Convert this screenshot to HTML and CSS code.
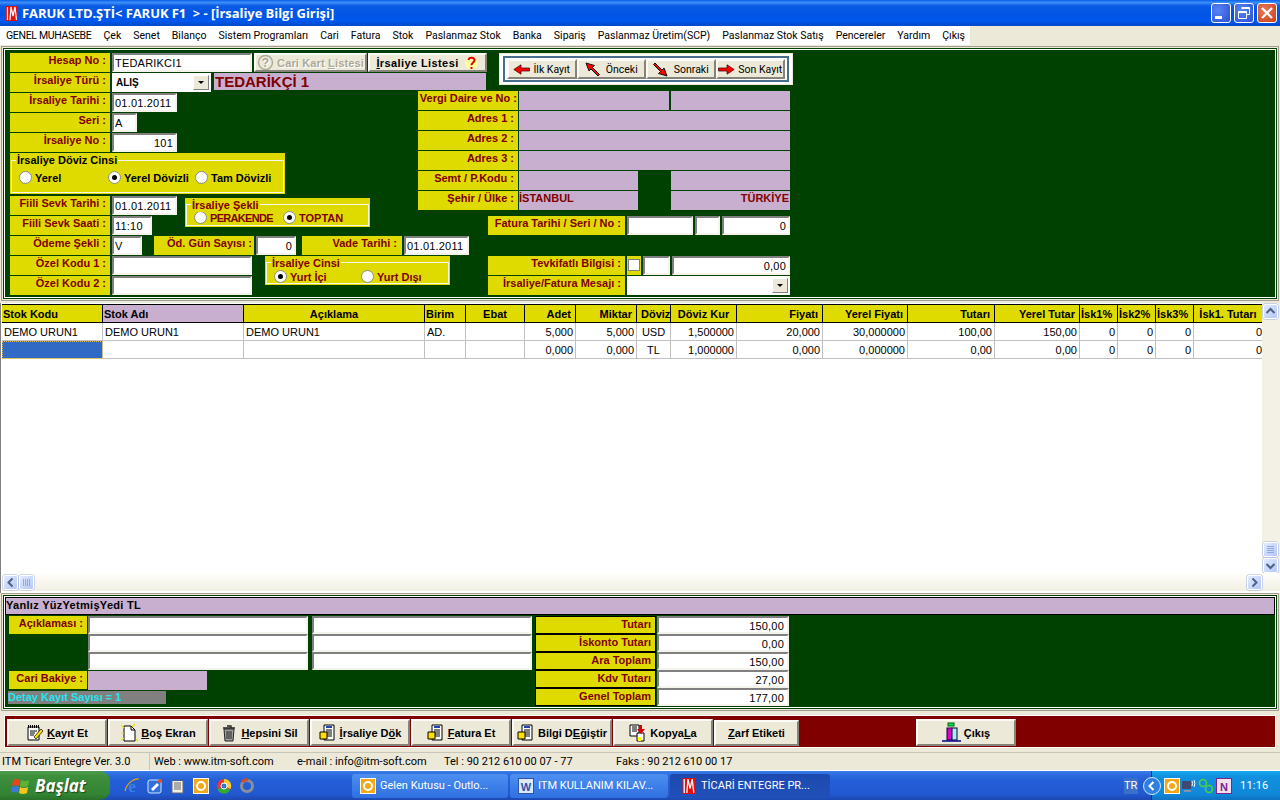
FILE: index.html
```html
<!DOCTYPE html>
<html lang="tr">
<head>
<meta charset="utf-8">
<title>İrsaliye Bilgi Girişi</title>
<link rel="stylesheet" href="styles.css">
</head>
<body>
<div class="app">
  <header class="titlebar">
    <svg class="applogo" viewBox="0 0 12 15" width="12" height="15"><rect width="12" height="15" fill="#e01010"/><path d="M1.500 1v13M4 14L5 1l2 9 2-9 1.500 13" stroke="#fff" stroke-width="1.200" fill="none"/></svg>
    <span class="title">FARUK LTD.ŞTİ&lt; FARUK F1 &nbsp;&gt; - [İrsaliye Bilgi Girişi]</span>
    <div class="winbtns">
      <span class="winbtn"><svg width="20" height="20" viewBox="0 0 20 20"><rect x="4" y="13" width="7" height="3" fill="#fff"/></svg></span>
      <span class="winbtn"><svg width="20" height="20" viewBox="0 0 20 20"><path d="M7.500 4.500h8v7h-3M4.500 8.500h8v7h-8z M4.500 9.500h8M7.500 5.500h8" fill="none" stroke="#fff"/></svg></span>
      <span class="winbtn close"><svg width="20" height="20" viewBox="0 0 20 20"><path d="M5 5l10 10M15 5L5 15" stroke="#fff" stroke-width="2.200"/></svg></span>
    </div>
  </header>

  <nav class="menubar">
    <div class="menuitems">
      <span class="caps">GENEL MUHASEBE</span><span>Çek</span><span>Senet</span><span>Bilanço</span><span>Sistem Programları</span><span>Cari</span><span>Fatura</span><span>Stok</span><span>Paslanmaz Stok</span><span>Banka</span><span>Sipariş</span><span>Paslanmaz Üretim(SCP)</span><span>Paslanmaz Stok Satış</span><span>Pencereler</span><span>Yardım</span><span>Çıkış</span>
    </div>
  </nav>

  <section class="formframe">
    <div class="greenpanel form">
      <div class="formhead">
        <div class="headleft">
          <div class="row">
            <div class="lb w100">Hesap No :</div>
            <div class="in w140">TEDARIKCI1</div>
            <button class="btn disabled btn-cari"><svg width="17" height="17" viewBox="0 0 17 17"><circle cx="8.500" cy="8.500" r="7" fill="#ece9d8" stroke="#a8a898" stroke-width="1.400"/><text x="8.500" y="12.500" text-anchor="middle" class="qtext">?</text></svg><span>Cari Kart <u>L</u>istesi</span></button>
            <button class="btn btn-list"><span><u>İ</u>rsaliye Listesi</span><svg width="15" height="16" viewBox="0 0 15 16"><circle cx="7.500" cy="8" r="6.500" fill="#ffffa0"/><path d="M4.500 5c.5-3 6-3 6 .3 0 2-3 2.300-3 5" fill="none" stroke="#e00000" stroke-width="2"/><rect x="6.500" y="12" width="2" height="2" fill="#e00000"/></svg></button>
          </div>
          <div class="row">
            <div class="lb w100">İrsaliye Türü :</div>
            <div class="combo w99"><span class="combotext">ALIŞ</span><span class="dropbtn"><i></i></span></div>
            <div class="tedarik">TEDARİKÇİ 1</div>
          </div>
        </div>
        <div class="navbox">
          <div class="navinner">
            <button class="btn navbtn"><svg width="17" height="11" viewBox="0 0 17 11"><path d="M.8 5.500L8 .8v3.200h8.500v3H8v3.200z" fill="#f00" stroke="#300" stroke-width=".7"/></svg><span>İlk Kayıt</span></button>
            <button class="btn navbtn"><svg width="15" height="15" viewBox="0 0 15 15"><path d="M1 1l8.500 2.500-2 2 7 7-1.500 1.500-7-7-2 2z" fill="#f00" stroke="#111" stroke-width="1"/></svg><span>Önceki</span></button>
            <button class="btn navbtn"><svg width="15" height="15" viewBox="0 0 15 15"><path d="M14 14l-8.500-2.500 2-2-7-7L2 1l7 7 2-2z" fill="#f00" stroke="#111" stroke-width="1"/></svg><span>Sonraki</span></button>
            <button class="btn navbtn"><svg width="17" height="11" viewBox="0 0 17 11"><path d="M16.200 5.500L9 .8v3.200H.5v3H9v3.200z" fill="#f00" stroke="#300" stroke-width=".7"/></svg><span>Son Kayıt</span></button>
          </div>
        </div>
      </div>

      <div class="formbody">
        <div class="leftcol">
          <div class="row"><div class="lb w100">İrsaliye Tarihi :</div><div class="in w65">01.01.2011</div></div>
          <div class="row"><div class="lb w100">Seri :</div><div class="in w25">A</div></div>
          <div class="row"><div class="lb w100">İrsaliye No :</div><div class="in w65 num">101</div></div>

          <div class="group gdoviz">
            <span class="legend">İrsaliye Döviz Cinsi</span>
            <div class="radios rd1">
              <label class="radio"><i class="rb"></i>Yerel</label>
              <label class="radio"><i class="rb on"></i>Yerel Dövizli</label>
              <label class="radio"><i class="rb"></i>Tam Dövizli</label>
            </div>
          </div>

          <div class="rowpair">
            <div class="stack">
              <div class="row"><div class="lb w100">Fiili Sevk Tarihi :</div><div class="in w65">01.01.2011</div></div>
              <div class="row"><div class="lb w100">Fiili Sevk Saati :</div><div class="in w40">11:10</div></div>
            </div>
            <div class="group gsekli">
              <span class="legend">İrsaliye Şekli</span>
              <div class="radios rd2">
                <label class="radio red"><i class="rb"></i><span class="cond">PERAKENDE</span></label>
                <label class="radio red"><i class="rb on"></i>TOPTAN</label>
              </div>
            </div>
          </div>

          <div class="row">
            <div class="lb w100">Ödeme Şekli :</div><div class="in w30">V</div>
            <div class="lb w100 gun">Öd. Gün Sayısı :</div><div class="in w40 num">0</div>
            <div class="lb w100 vade">Vade Tarihi :</div><div class="in w65">01.01.2011</div>
          </div>

          <div class="rowpair">
            <div class="stack">
              <div class="row"><div class="lb w100">Özel Kodu 1 :</div><div class="in w140"></div></div>
              <div class="row"><div class="lb w100">Özel Kodu 2 :</div><div class="in w140"></div></div>
            </div>
            <div class="group gcinsi">
              <span class="legend">İrsaliye Cinsi</span>
              <div class="radios rd3">
                <label class="radio red"><i class="rb on"></i>Yurt İçi</label>
                <label class="radio red"><i class="rb"></i>Yurt Dışı</label>
              </div>
            </div>
          </div>
        </div>

        <div class="rightcol">
          <div class="row"><div class="lb w100 tight">Vergi Daire ve No :</div><div class="val w150"></div><div class="val w119 gap2"></div></div>
          <div class="row"><div class="lb w100">Adres 1 :</div><div class="val w271"></div></div>
          <div class="row"><div class="lb w100">Adres 2 :</div><div class="val w271"></div></div>
          <div class="row"><div class="lb w100">Adres 3 :</div><div class="val w271"></div></div>
          <div class="row"><div class="lb w100">Semt / P.Kodu :</div><div class="val w119x"></div><div class="val w119 gap33"></div></div>
          <div class="row"><div class="lb w100">Şehir / Ülke :</div><div class="val w119x">İSTANBUL</div><div class="val w119 gap33 right">TÜRKİYE</div></div>
          <div class="row rfat">
            <div class="lb w137">Fatura Tarihi / Seri / No :</div>
            <div class="in w66"></div><div class="in w25"></div><div class="in w68 num">0</div>
          </div>
          <div class="row rtev">
            <div class="lb w137">Tevkifatlı Bilgisi :</div>
            <div class="chkwrap"><i class="chk"></i></div>
            <div class="in w27"></div><div class="in w118 num">0,00</div>
          </div>
          <div class="row rmes">
            <div class="lb w137">İrsaliye/Fatura Mesajı :</div>
            <div class="combo w163"><span class="combotext"></span><span class="dropbtn"><i></i></span></div>
          </div>
        </div>
      </div>
    </div>
  </section>

  <section class="gridpanel">
    <div class="gridmain">
      <table class="datagrid">
        <thead>
          <tr>
            <th class="l">Stok Kodu</th><th class="l lilac">Stok Adı</th><th>Açıklama</th><th class="l">Birim</th><th>Ebat</th><th class="r">Adet</th><th class="r">Miktar</th><th>Döviz</th><th>Döviz Kur</th><th class="r">Fiyatı</th><th class="r">Yerel Fiyatı</th><th class="r">Tutarı</th><th class="r">Yerel Tutar</th><th class="l">İsk1%</th><th class="l">İsk2%</th><th class="l">İsk3%</th><th>İsk1. Tutarı</th>
          </tr>
        </thead>
        <tbody>
          <tr>
            <td>DEMO URUN1</td><td>DEMO URUN1</td><td>DEMO URUN1</td><td>AD.</td><td></td><td class="r">5,000</td><td class="r">5,000</td><td class="c">USD</td><td class="r">1,500000</td><td class="r">20,000</td><td class="r">30,000000</td><td class="r">100,00</td><td class="r">150,00</td><td class="r">0</td><td class="r">0</td><td class="r">0</td><td class="r">0</td>
          </tr>
          <tr>
            <td class="selected"></td><td></td><td></td><td></td><td></td><td class="r">0,000</td><td class="r">0,000</td><td class="c">TL</td><td class="r">1,000000</td><td class="r">0,000</td><td class="r">0,000000</td><td class="r">0,00</td><td class="r">0,00</td><td class="r">0</td><td class="r">0</td><td class="r">0</td><td class="r">0</td>
          </tr>
        </tbody>
      </table>
      <div class="vscroll">
        <span class="sbtn"><svg width="15" height="15" viewBox="0 0 15 15"><path d="M3.500 9l4-4 4 4" class="chev"/></svg></span>
        <span class="vspace"></span>
        <span class="sbtn thumb"><svg width="15" height="15" viewBox="0 0 15 15"><path d="M4 4.500h7M4 6.500h7M4 8.500h7M4 10.500h7" class="grip"/></svg></span>
        <span class="sbtn"><svg width="15" height="15" viewBox="0 0 15 15"><path d="M3.500 6l4 4 4-4" class="chev"/></svg></span>
      </div>
    </div>
    <div class="hscroll">
      <span class="sbtn"><svg width="15" height="15" viewBox="0 0 15 15"><path d="M9.500 3.500l-4 4 4 4" class="chev"/></svg></span>
      <span class="sbtn thumb"><svg width="15" height="15" viewBox="0 0 15 15"><path d="M4.500 4v7M6.500 4v7M8.500 4v7M10.500 4v7" class="grip"/></svg></span>
      <span class="hspace"></span>
      <span class="sbtn"><svg width="15" height="15" viewBox="0 0 15 15"><path d="M5.500 3.500l4 4-4 4" class="chev"/></svg></span>
    </div>
  </section>

  <section class="totalsframe">
    <div class="greenpanel totals">
      <div class="yazi">Yanlız YüzYetmişYedi TL</div>
      <div class="totalsbody">
        <div class="notes">
          <div class="noterow"><div class="lb2">Açıklaması :</div><div class="in w220 s18"></div><div class="in w220 s18"></div></div>
          <div class="noterow"><div class="spacer78"></div><div class="in w220 s18"></div><div class="in w220 s18"></div></div>
          <div class="noterow"><div class="spacer78"></div><div class="in w220 s18"></div><div class="in w220 s18"></div></div>
          <div class="noterow cari"><div class="lb2">Cari Bakiye :</div><div class="val w119"></div></div>
          <div class="detay">Detay Kayıt Sayısı = 1</div>
        </div>
        <div class="sums">
          <div class="sumrow"><div class="sumlb">Tutarı</div><div class="in sumval">150,00</div></div>
          <div class="sumrow"><div class="sumlb">İskonto Tutarı</div><div class="in sumval">0,00</div></div>
          <div class="sumrow"><div class="sumlb">Ara Toplam</div><div class="in sumval">150,00</div></div>
          <div class="sumrow"><div class="sumlb">Kdv Tutarı</div><div class="in sumval">27,00</div></div>
          <div class="sumrow"><div class="sumlb">Genel Toplam</div><div class="in sumval">177,00</div></div>
        </div>
      </div>
    </div>
  </section>

  <section class="actionsframe">
    <div class="actions">
      <button class="btn act"><svg width="18" height="18" viewBox="0 0 18 18"><path d="M2 3h11v13H2z" fill="#fff" stroke="#000"/><path d="M2.500 1v3M4.500 1v3M6.500 1v3M8.500 1v3M10.500 1v3M12.500 1v3" stroke="#000"/><path d="M4 7h7M4 9h5M4 11h4" stroke="#000"/><path d="M8 13l7-8 2 2-7 8z" fill="#ffe000" stroke="#000" stroke-width=".7"/></svg><span><u>K</u>ayıt Et</span></button>
      <button class="btn act"><svg width="18" height="18" viewBox="0 0 18 18"><path d="M4 2h7l4 4v11H4z" fill="#fff" stroke="#000"/><path d="M11 2v4h4" fill="none" stroke="#000"/><path d="M1 1l3 3M15 0l-3 3M1 9h3M16 15l2 2M1 16l3-2" stroke="#e8e000" stroke-width="1.200"/></svg><span><u>B</u>oş Ekran</span></button>
      <button class="btn act"><svg width="18" height="18" viewBox="0 0 18 18"><path d="M4 5h10l-1 12H5z" fill="#a0a0a0" stroke="#222"/><path d="M3 4h12M7 2h4v2" fill="none" stroke="#222" stroke-width="1.300"/><path d="M7 7v8M9 7v8M11 7v8" stroke="#222"/></svg><span><u>H</u>epsini Sil</span></button>
      <button class="btn act"><svg class="doc" width="18" height="18" viewBox="0 0 18 18"><use href="#docicon"/></svg><span><u>İ</u>rsaliye D<u>ö</u>k</span></button>
      <button class="btn act"><svg class="doc" width="18" height="18" viewBox="0 0 18 18"><use href="#docicon"/></svg><span><u>F</u>atura Et</span></button>
      <button class="btn act"><svg class="doc" width="18" height="18" viewBox="0 0 18 18"><use href="#docicon"/></svg><span>Bilgi D<u>E</u>ğiştir</span></button>
      <button class="btn act"><svg width="18" height="18" viewBox="0 0 18 18"><path d="M1 1h9v11H1z" fill="#fff" stroke="#000"/><path d="M3 3h5M3 5h5M3 7h5" stroke="#000"/><path d="M8 9h7v8H8z" fill="#fff" stroke="#000"/><path d="M10 1h3v4h3l-4 5-4-5h2z" fill="#e00000"/><rect x="9" y="13" width="3" height="4" fill="#ff0"/></svg><span>Kopya<u>L</u>a</span></button>
      <button class="btn act zarf"><span><u>Z</u>arf Etiketi</span></button>
      <button class="btn act cikis"><svg width="19" height="21" viewBox="0 0 19 21"><rect x="6" y="1" width="6" height="3" fill="#00e060" stroke="#060"/><rect x="5" y="6" width="5" height="12" fill="#e000d0" stroke="#003"/><rect x="10" y="6" width="5" height="12" fill="#a8f0f0" stroke="#003"/><path d="M0 19h19" stroke="#008" stroke-width="1.500"/></svg><span>Çıkış</span></button>
    </div>
  </section>

  <footer class="statusbar">
    <div class="stat s1">ITM Ticari Entegre Ver. 3.0</div>
    <div class="stat s2"><span>Web : www.itm-soft.com</span><span>e-mail : info@itm-soft.com</span><span>Tel : 90 212 610 00 07 - 77</span><span>Faks : 90 212 610 00 17</span></div>
  </footer>

  <div class="taskbar">
    <div class="start"><svg width="20" height="18" viewBox="0 0 20 18"><path d="M2 3q3-2 7 0l-1 6q-4-2-7 0z" fill="#e8451e"/><path d="M10 3q4 2 8 0l-1 6q-4 2-8 0z" fill="#5bb431"/><path d="M1 10q3-2 7 0l-1 6q-4-2-7 0z" fill="#3b78d8"/><path d="M9 10q4 2 8 0l-1 6q-4 2-8 0z" fill="#f5c518"/></svg><span>Başlat</span></div>
    <div class="quick">
      <svg class="ieicon" width="18" height="18" viewBox="0 0 18 18"><text x="9" y="15" text-anchor="middle" class="ie">e</text><path d="M2 14C4 6 11 1 16 2" fill="none" stroke="#e8a317" stroke-width="1.200"/></svg>
      <svg width="16" height="16" viewBox="0 0 16 16"><rect x="1" y="2" width="13" height="13" rx="2" fill="#2f6fd8" stroke="#cfe4ff"/><path d="M4 11l6-6 2 2-6 6z" fill="#fff"/><circle cx="13" cy="3" r="2" fill="#e85020"/></svg>
      <svg width="16" height="16" viewBox="0 0 16 16"><rect x="2" y="2" width="11" height="13" fill="#f4f0dc" stroke="#667"/><path d="M4 5h7M4 7h7M4 9h7M4 11h7" stroke="#667"/><path d="M2 2h11" stroke="#3060b0" stroke-width="2"/></svg>
      <svg width="16" height="16" viewBox="0 0 16 16"><rect x=".5" y=".5" width="15" height="15" fill="#f4a818" stroke="#fff"/><circle cx="8" cy="8" r="4" fill="none" stroke="#fff" stroke-width="2"/></svg>
      <svg width="16" height="16" viewBox="0 0 16 16"><circle cx="8" cy="8" r="7" fill="#e33"/><path d="M8 8L1.500 11.500A7 7 0 0 0 14 12z" fill="#3a3"/><path d="M8 1a7 7 0 0 1 6.500 10L8 8z" fill="#fc3"/><circle cx="8" cy="8" r="3" fill="#37c" stroke="#fff"/></svg>
      <svg width="16" height="16" viewBox="0 0 16 16"><circle cx="8" cy="8" r="5.500" fill="none" stroke="#8a8f9a" stroke-width="3"/><path d="M3 4a6 6 0 0 1 6-2" fill="none" stroke="#d84a20" stroke-width="3"/></svg>
    </div>
    <div class="tasks">
      <div class="task"><svg width="16" height="16" viewBox="0 0 16 16"><rect x=".5" y=".5" width="15" height="15" fill="#f4a818" stroke="#fff"/><circle cx="8" cy="8" r="4" fill="none" stroke="#fff" stroke-width="2"/></svg><span>Gelen Kutusu - Outlo...</span></div>
      <div class="task"><svg width="16" height="16" viewBox="0 0 16 16"><rect x=".5" y=".5" width="15" height="15" fill="#dfe8f8" stroke="#2a55a8"/><text x="8" y="13" text-anchor="middle" class="wd">W</text></svg><span>ITM KULLANIM KILAV...</span></div>
      <div class="task active"><svg width="16" height="16" viewBox="0 0 12 15"><rect width="12" height="15" fill="#e01010"/><path d="M1.500 1v13M4 14L5 1l2 9 2-9 1.500 13" stroke="#fff" stroke-width="1.200" fill="none"/></svg><span>TİCARİ ENTEGRE PR...</span></div>
    </div>
    <div class="lang">TR</div>
    <div class="tray">
      <span class="trayarrow"><svg width="18" height="18" viewBox="0 0 18 18"><circle cx="9" cy="9" r="8.500" fill="#2f7fe0" stroke="#cfe8ff"/><path d="M10.500 5l-4 4 4 4" fill="none" stroke="#fff" stroke-width="2"/></svg></span>
      <svg width="16" height="16" viewBox="0 0 16 16"><rect x=".5" y=".5" width="15" height="15" fill="#f4a818" stroke="#fff"/><circle cx="8" cy="8" r="4" fill="none" stroke="#fff" stroke-width="2"/></svg>
      <svg width="16" height="16" viewBox="0 0 16 16"><rect x="1" y="3" width="9" height="8" fill="#404a70"/><rect x="3" y="12" width="7" height="2" fill="#8890b0"/><path d="M11 3a6 6 0 0 1 0 5M13 2a8 8 0 0 1 0 7" stroke="#fff" fill="none"/></svg>
      <svg width="16" height="16" viewBox="0 0 16 16"><circle cx="5" cy="5" r="3.500" fill="none" stroke="#50d040" stroke-width="1.500"/><circle cx="11" cy="11" r="3.500" fill="none" stroke="#50d040" stroke-width="1.500"/></svg>
      <svg class="onenote" width="16" height="16" viewBox="0 0 16 16"><rect x=".5" y=".5" width="15" height="15" fill="#efe0f0" stroke="#80208c"/><text x="8" y="13" text-anchor="middle" class="on-n">N</text></svg>
      <span class="clock">11:16</span>
    </div>
  </div>
</div>

<svg class="defs" width="0" height="0"><defs><g id="docicon"><path d="M5 1h10v15H5z" fill="#fff" stroke="#000"/><path d="M7 3h6" stroke="#2040c0" stroke-width="2"/><path d="M7 6h6M7 8h6M7 10h6M7 12h6" stroke="#000"/><path d="M1 8h7v7H1z" fill="#ffe000" stroke="#000"/></g></defs></svg>
</body>
</html>
```

FILE: styles.css
```css
* { box-sizing: border-box; }
html, body { margin: 0; padding: 0; }
body { width: 1280px; height: 800px; overflow: hidden; background: #ece9d8; font-family: "Liberation Sans", Arial, sans-serif; font-size: 11px; color: #000; }
.defs { position: absolute; }
.app { display: flex; flex-direction: column; width: 1280px; height: 800px; overflow: hidden; }

/* title */
.titlebar { height: 26px; flex: none; display: flex; align-items: center; padding-left: 6px; gap: 4px;
  background: linear-gradient(180deg, #0a5fe8 0%, #3d8ff8 10%, #0a5ce6 22%, #0054e3 55%, #0058ee 80%, #0048c8 100%); }
.applogo { flex: none; }
.title { color: #fff; font: bold 13px "Open Sans", "Liberation Sans", sans-serif; white-space: nowrap; letter-spacing: -.06px; }
.winbtns { margin-left: auto; display: flex; gap: 3px; padding-right: 3px; }
.winbtn { width: 20px; height: 20px; border: 1px solid #fff; border-radius: 3px; background: radial-gradient(circle at 35% 35%, #5a84f0, #2850d8); display: block; overflow: hidden; }
.winbtn svg { display: block; margin: -1px; }
.winbtn.close { background: radial-gradient(circle at 35% 35%, #e87a58, #cc3c18); }

/* menu */
.menubar { height: 19px; flex: none; background: #ece9d8; }
.menuitems { width: 970px; height: 19px; background: #fff; display: flex; align-items: center; padding-left: 6px; gap: 12px; font-family: Roboto, "Liberation Sans", sans-serif; font-size: 10.5px; white-space: nowrap; }
.caps { letter-spacing: -.32px; }

/* form frame */
.formframe { height: 258px; flex: none; padding: 1px 1px 3px; }
.greenpanel { background: #004000; box-shadow: inset 0 0 0 1px #004000, inset 0 0 0 2px #fff, 0 0 0 1px #ece9d8, 0 0 0 2px #a09e90; }
.form { margin: 2px 2px 0 2px; padding: 5px 0 0 7px; height: 251px; }
.formhead { display: flex; height: 40px; }
.headleft { width: 477px; }
.row { display: flex; height: 20px; flex: none; }
.lb { background: #dfdb00; color: #800000; font-weight: bold; text-align: right; padding: 0 4px 0 0; height: 19px; line-height: 14px; white-space: nowrap; margin-right: 2px; }
.tight { padding-right: 1px; }
.w100 { width: 100px; }
.w137 { width: 137px; }
.in { background: #fff; border: 2px solid; border-color: #808080 #f4f3ec #f4f3ec #808080; height: 19px; padding: 0 2px 0 1px; line-height: 16px; white-space: nowrap; overflow: hidden; margin-right: 2px; letter-spacing: .2px; }
.num { text-align: right; }
.w140 { width: 140px; }
.w65 { width: 65px; }
.w25 { width: 25px; }
.w40 { width: 40px; }
.w30 { width: 30px; }
.w66 { width: 66px; }
.w68 { width: 68px; margin-right: 0; }
.w27 { width: 27px; }
.w118 { width: 118px; margin-right: 0; }

.btn { background: #ece9d8; border: 2px solid; border-color: #fbfaf4 #85837a #85837a #fbfaf4; font-family: "Liberation Sans", Arial, sans-serif; display: flex; align-items: center; justify-content: center; padding: 0; color: #000; white-space: nowrap; }
.btn-cari { width: 113px; height: 19px; gap: 3px; margin-right: 1px; font-weight: bold; font-size: 11px; letter-spacing: .15px; color: #aca899; text-shadow: 1px 1px 0 #fff; }
.qtext { font: bold 12px "Liberation Sans", sans-serif; fill: #a8a898; }
.btn-list { width: 119px; height: 19px; gap: 5px; font-weight: bold; font-size: 11px; letter-spacing: .4px; }

.combo { background: #fff; height: 19px; display: flex; align-items: center; margin-right: 3px; padding: 0 2px 1px 4px; }
.w99 { width: 99px; }
.w163 { width: 163px; margin-right: 0; }
.combotext { flex: 1; font-weight: bold; font-size: 10px; }
.dropbtn { width: 16px; height: 15px; background: #ece9d8; border: 1px solid; border-color: #fff #808080 #808080 #fff; display: flex; align-items: center; justify-content: center; }
.dropbtn i { width: 0; height: 0; border: 3px solid transparent; border-top-color: #000; border-bottom: 0; }
.tedarik { width: 272px; height: 17px; background: #c9afcf; color: #800000; font-weight: bold; font-size: 15px; line-height: 17px; padding-left: 1px; }

.navbox { margin-left: 12px; width: 294px; height: 32px; background: #fff; padding: 3px 4px; box-shadow: inset 0 0 0 1px #ece9d8; }
.navinner { height: 26px; border: 2px solid #476d8f; padding: 1px 2px; display: flex; }
.btn.navbtn { width: 70px; height: 20px; gap: 3px; font-size: 10.5px; font-family: Roboto, "Liberation Sans", sans-serif; }
.btn.navbtn:nth-child(2), .btn.navbtn:nth-child(3) { gap: 6px; }

.formbody { display: grid; }
.leftcol, .rightcol { grid-area: 1 / 1; }
.rightcol { margin: -2px 0 0 408px; }
.rightcol .w100 { margin-right: 1px; }
.group { background: #dfdb00; position: relative; }
.group::before { content: ""; position: absolute; border: 1px solid #f8f8e8; }
.gdoviz { width: 275px; height: 41px; margin-bottom: 2px; }
.gdoviz::before { left: 1px; right: 1px; top: 7px; bottom: 1px; }
.gsekli { width: 185px; height: 29px; margin: 2px 0 0 6px; }
.gsekli::before { left: 1px; right: 1px; top: 6px; bottom: 1px; }
.gcinsi { width: 185px; height: 29px; margin-left: 11px; }
.gcinsi::before { left: 1px; right: 1px; top: 6px; bottom: 1px; }
.legend { position: absolute; left: 6px; top: 1px; background: #dfdb00; padding: 0 1px; font-weight: bold; line-height: 13px; white-space: nowrap; z-index: 1; }
.gsekli .legend, .gcinsi .legend { color: #800000; }
.radios { position: relative; display: flex; }
.radio { display: flex; align-items: center; font-weight: bold; gap: 3px; white-space: nowrap; color: #000; }
.radio.red { color: #800000; }
.cond { letter-spacing: -.7px; }
.rb { width: 13px; height: 13px; border-radius: 50%; background: #fff; border: 1px solid #8c8c80; display: block; position: relative; flex: none; }
.rb.on::after { content: ""; position: absolute; left: 3px; top: 3px; width: 5px; height: 5px; border-radius: 50%; background: #000; }
.rd1 { padding: 18px 0 0 9px; }
.rd1 .radio:nth-child(1) { width: 89px; }
.rd1 .radio:nth-child(2) { width: 87px; }
.rd2 { padding: 13px 0 0 9px; }
.rd2 .radio:nth-child(1) { width: 89px; }
.rd3 { padding: 14px 0 0 9px; }
.rd3 .radio:nth-child(1) { width: 87px; }
.rowpair { display: flex; }
.stack { display: flex; flex-direction: column; }
.gun { margin-left: 10px; padding-right: 2px; }
.vade { margin-left: 4px; padding-right: 5px; }

.val { background: #c9afcf; height: 19px; color: #800000; font-weight: bold; line-height: 14px; white-space: nowrap; }
.w150 { width: 150px; }
.w271 { width: 271px; }
.w119 { width: 119px; }
.w119x { width: 119px; }
.gap2 { margin-left: 2px; }
.gap33 { margin-left: 33px; }
.right { text-align: right; padding-right: 1px; }
.rfat { margin: 5px 0 20px 70px; }
.rtev, .rmes { margin-left: 70px; }
.chkwrap { width: 14px; height: 19px; background: #dfdb00; margin-right: 2px; padding: 3px 1px; }
.chk { display: block; width: 12px; height: 12px; background: #fff; border: 1px solid #808080; }

/* data grid */
.gridpanel { height: 290px; flex: none; background: #fff; padding-left: 2px; display: flex; flex-direction: column; box-shadow: inset 1px 0 0 #808080; }
.gridmain { display: flex; height: 270px; }
.datagrid { table-layout: fixed; width: 1260px; border-collapse: separate; border-spacing: 0; font-family: "Liberation Sans", Arial, sans-serif; font-size: 11px; align-self: flex-start; margin-top: 1px; }
.datagrid th { height: 19px; background: #dfdb00; border-right: 1px solid #000; border-bottom: 1px solid #000; border-top: 1px solid #000; font-weight: bold; padding: 0 4px; overflow: hidden; white-space: nowrap; text-align: center; }
.datagrid th.l { text-align: left; padding-left: 1px; }
.datagrid th.r { text-align: right; padding-right: 4px; }
.datagrid th.lilac { background: #c9afcf; }
.datagrid th:last-child { border-right: 0; }
.datagrid td { height: 18px; border-right: 1px solid #c0c0c0; border-bottom: 1px solid #c0c0c0; padding: 0 2px; overflow: hidden; white-space: nowrap; }
.datagrid td.r { text-align: right; }
.datagrid td.c { text-align: center; }
.datagrid td:last-child { border-right: 0; padding-right: 0; }
.datagrid td.selected { background: #316ac5; outline: 1px dotted #e0c060; outline-offset: -1px; }
.datagrid th:nth-child(1) { width: 101px; }
.datagrid th:nth-child(2) { width: 141px; }
.datagrid th:nth-child(3) { width: 181px; }
.datagrid th:nth-child(4) { width: 41px; }
.datagrid th:nth-child(5) { width: 59px; }
.datagrid th:nth-child(6) { width: 51px; }
.datagrid th:nth-child(7) { width: 61px; }
.datagrid th:nth-child(8) { width: 34px; }
.datagrid th:nth-child(9) { width: 66px; }
.datagrid th:nth-child(10) { width: 86px; }
.datagrid th:nth-child(11) { width: 85px; }
.datagrid th:nth-child(12) { width: 87px; }
.datagrid th:nth-child(13) { width: 85px; }
.datagrid th:nth-child(14), .datagrid th:nth-child(15), .datagrid th:nth-child(16) { width: 38px; }
.datagrid th:nth-child(17) { width: 68px; }

.vscroll { width: 18px; height: 270px; background: #f3f1e6; display: flex; flex-direction: column; padding: 1px 2px 0 1px; gap: 1px; flex: none; }
.vspace, .hspace { flex: 1; }
.sbtn { width: 15px; height: 15px; flex: none; display: block; background: linear-gradient(135deg, #e2ebfe, #b4c8f6); border: 1px solid #fff; border-radius: 2px; box-shadow: 0 0 0 .5px #9fb4e2; overflow: hidden; }
.sbtn svg { display: block; margin: -1px; }
.chev { fill: none; stroke: #4d6185; stroke-width: 2; }
.grip { stroke: #8ea8e8; fill: none; }
.hscroll { height: 18px; flex: none; display: flex; align-items: center; gap: 1px; padding: 0 18px 0 1px; background: linear-gradient(180deg, #fefefb, #f1efe2); }

/* totals */
.totalsframe { height: 118px; flex: none; padding: 2px 3px 0; background: #ece9d8; }
.totals { height: 114px; padding: 2px; }
.yazi { height: 18px; background: #c9afcf; border: 1px solid #000; font-weight: bold; line-height: 15px; letter-spacing: .3px; }
.totalsbody { display: flex; padding-top: 1px; }
.notes { width: 530px; padding-left: 4px; }
.noterow { display: flex; height: 18px; }
.lb2 { width: 78px; height: 18px; background: #dfdb00; color: #800000; font-weight: bold; text-align: right; padding-right: 4px; line-height: 14px; }
.spacer78 { width: 78px; }
.s18 { height: 18px; }
.w220 { width: 220px; margin-left: 1px; margin-right: 3px; }
.noterow.cari { margin-top: 1px; }
.noterow.cari .val { margin-left: 1px; }
.detay { width: 158px; height: 13px; background: #808080; color: #20e8f0; font-weight: bold; line-height: 13px; margin: 2px 0 0 -1px; }
.sums { width: 260px; }
.sumrow { display: flex; height: 18px; }
.sumlb { width: 121px; height: 18px; background: #dfdb00; border: 1px solid #000; color: #800000; font-weight: bold; text-align: right; padding-right: 4px; line-height: 14px; }
.sumval { width: 132px; height: 18px; margin: 0 0 0 1px; text-align: right; padding-top: 0; padding-right: 3px; }

/* actions */
.actionsframe { height: 38px; flex: none; padding: 4px 4px 0; }
.actions { height: 33px; background: #800000; display: flex; gap: 1px; padding: 4px 3px 0; box-shadow: inset 0 0 0 1px #fff; }
.btn.act { width: 100px; height: 27px; font-weight: bold; font-size: 11px; gap: 3px; flex: none; }
.btn.act.zarf { width: 85px; margin-top: 1px; height: 26px; }
.btn.act.cikis { margin-left: 116px; }

/* status */
.statusbar { height: 21px; flex: none; display: flex; padding-top: 3px; font-family: Roboto, "Liberation Sans", sans-serif; font-size: 11px; }
.stat { line-height: 17px; white-space: nowrap; padding-left: 2px; border-top: 1px solid #c8c6b8; }
.s1 { width: 150px; border-right: 1px solid #c8c6b8; }
.s2 { flex: 1; padding-left: 4px; display: flex; }
.s2 span:nth-child(1) { width: 143px; }
.s2 span:nth-child(2) { width: 147px; }
.s2 span:nth-child(3) { width: 172px; }

/* taskbar */
.taskbar { height: 30px; flex: none; display: flex; align-items: center; background: linear-gradient(180deg, #3a7de8 0%, #2f6fe0 10%, #2460d8 30%, #2258d0 80%, #1c48b0 100%); border-top: 1px solid #fff; color: #fff; font-family: Roboto, "Liberation Sans", sans-serif; font-size: 11px; }
.start { width: 110px; height: 29px; flex: none; display: flex; align-items: center; gap: 4px; padding-left: 11px; border-radius: 0 10px 10px 0; background: linear-gradient(180deg, #4d9b4d 0%, #3c8f3c 20%, #338433 80%, #2a702a 100%); }
.start span { font: italic bold 17px "Open Sans", "Liberation Sans", sans-serif; color: #fff; text-shadow: 1px 1px 1px #1a4a1a; }
.quick { width: 242px; flex: none; display: flex; align-items: center; gap: 7px; padding-left: 13px; }
.ieicon { margin-right: -1px; }
.ie { font: bold 17px "Liberation Serif", serif; fill: #3a80e8; }
.wd { font: bold 11px "Liberation Sans", sans-serif; fill: #2a55a8; }
.on-n { font: bold 11px "Liberation Sans", sans-serif; fill: #80208c; }
.tasks { display: flex; gap: 2px; width: 478px; flex: none; }
.task { width: 156px; height: 24px; flex: none; border-radius: 3px; background: linear-gradient(180deg, #4d90f0, #3a7ce8 60%, #3070e0); display: flex; align-items: center; gap: 4px; padding-left: 8px; white-space: nowrap; overflow: hidden; }
.task:nth-child(2) { width: 158px; }
.task.active { width: 160px; padding-left: 11px; background: linear-gradient(180deg, #1c4ab0, #2050b8); }
.lang { margin-left: auto; width: 14px; margin-right: 13px; background: #3a70c8; line-height: 16px; font-size: 11px; }
.tray { width: 129px; height: 29px; flex: none; display: flex; align-items: center; gap: 1px; background: linear-gradient(180deg, #18a8ee, #1290e0 20%, #1088d8 80%, #1070c0); border-left: 1px solid #0a3a90; }
.trayarrow { margin: 0 2px 0 -9px; height: 18px; display: block; }
.onenote { margin-left: 1px; }
.clock { margin-left: 7px; font-size: 11px; letter-spacing: .2px; }
```
